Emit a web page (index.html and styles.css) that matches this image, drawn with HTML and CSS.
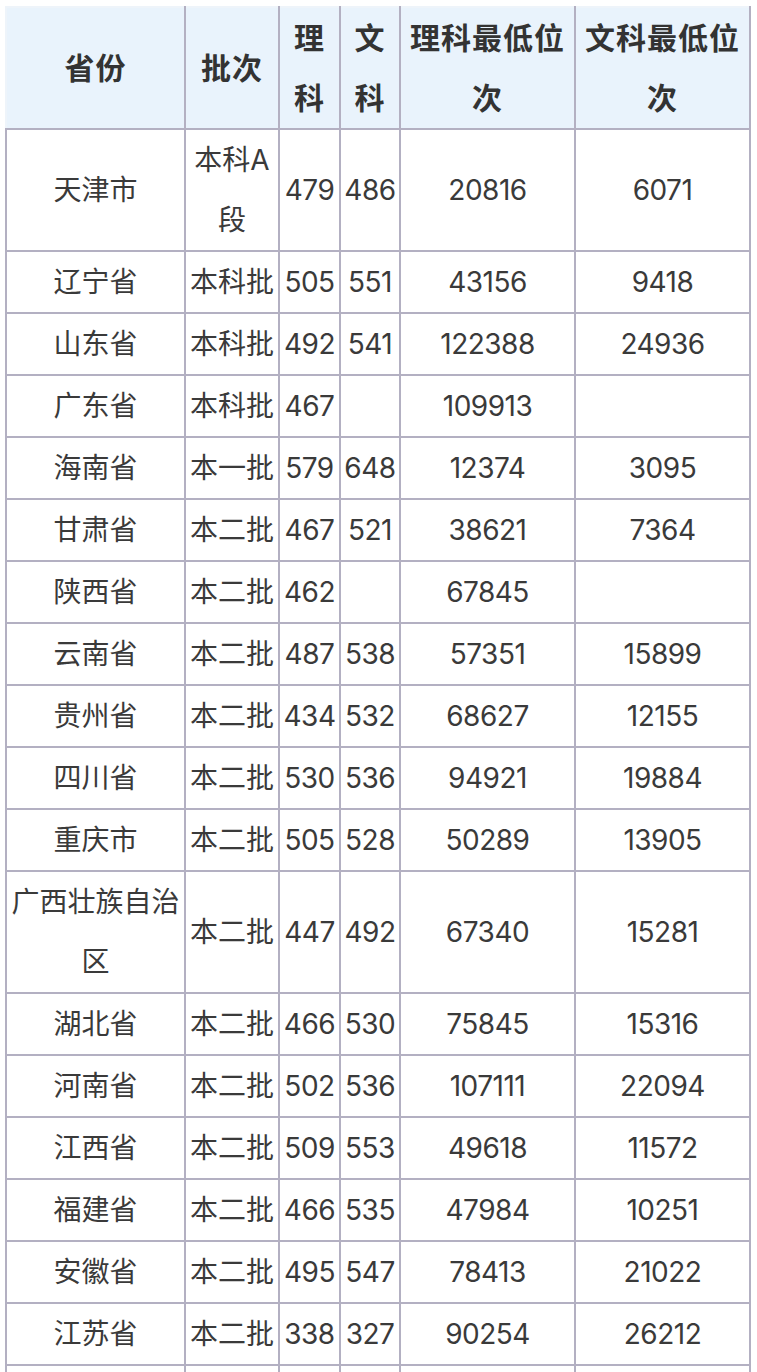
FILE: index.html
```html
<!DOCTYPE html>
<html lang="zh-CN">
<head>
<meta charset="utf-8">
<title>录取分数</title>
<link rel="stylesheet" href="styles.css">
</head>
<body>
<table class="score">
<colgroup>
<col class="c-prov"><col class="c-batch"><col class="c-li"><col class="c-wen"><col class="c-rank"><col class="c-rank">
</colgroup>
<thead>
<tr><th>省份</th><th>批次</th><th>理科</th><th>文科</th><th>理科最低位次</th><th>文科最低位次</th></tr>
</thead>
<tbody>
<tr><td>天津市</td><td>本科A段</td><td class="num">479</td><td class="num">486</td><td class="num">20816</td><td class="num">6071</td></tr>
<tr><td>辽宁省</td><td>本科批</td><td class="num">505</td><td class="num">551</td><td class="num">43156</td><td class="num">9418</td></tr>
<tr><td>山东省</td><td>本科批</td><td class="num">492</td><td class="num">541</td><td class="num">122388</td><td class="num">24936</td></tr>
<tr><td>广东省</td><td>本科批</td><td class="num">467</td><td class="num"></td><td class="num">109913</td><td class="num"></td></tr>
<tr><td>海南省</td><td>本一批</td><td class="num">579</td><td class="num">648</td><td class="num">12374</td><td class="num">3095</td></tr>
<tr><td>甘肃省</td><td>本二批</td><td class="num">467</td><td class="num">521</td><td class="num">38621</td><td class="num">7364</td></tr>
<tr><td>陕西省</td><td>本二批</td><td class="num">462</td><td class="num"></td><td class="num">67845</td><td class="num"></td></tr>
<tr><td>云南省</td><td>本二批</td><td class="num">487</td><td class="num">538</td><td class="num">57351</td><td class="num">15899</td></tr>
<tr><td>贵州省</td><td>本二批</td><td class="num">434</td><td class="num">532</td><td class="num">68627</td><td class="num">12155</td></tr>
<tr><td>四川省</td><td>本二批</td><td class="num">530</td><td class="num">536</td><td class="num">94921</td><td class="num">19884</td></tr>
<tr><td>重庆市</td><td>本二批</td><td class="num">505</td><td class="num">528</td><td class="num">50289</td><td class="num">13905</td></tr>
<tr><td>广西壮族自治区</td><td>本二批</td><td class="num">447</td><td class="num">492</td><td class="num">67340</td><td class="num">15281</td></tr>
<tr><td>湖北省</td><td>本二批</td><td class="num">466</td><td class="num">530</td><td class="num">75845</td><td class="num">15316</td></tr>
<tr><td>河南省</td><td>本二批</td><td class="num">502</td><td class="num">536</td><td class="num">107111</td><td class="num">22094</td></tr>
<tr><td>江西省</td><td>本二批</td><td class="num">509</td><td class="num">553</td><td class="num">49618</td><td class="num">11572</td></tr>
<tr><td>福建省</td><td>本二批</td><td class="num">466</td><td class="num">535</td><td class="num">47984</td><td class="num">10251</td></tr>
<tr><td>安徽省</td><td>本二批</td><td class="num">495</td><td class="num">547</td><td class="num">78413</td><td class="num">21022</td></tr>
<tr><td>江苏省</td><td>本二批</td><td class="num">338</td><td class="num">327</td><td class="num">90254</td><td class="num">26212</td></tr>
<tr class="tail"><td></td><td></td><td></td><td></td><td></td><td></td></tr>
</tbody>
</table>
</body>
</html>
```
FILE: styles.css
```css
html, body {
  margin: 0;
  padding: 0;
  background: #ffffff;
}
body {
  padding: 6px 0 0 5px;
  font-family: "Inter", "Noto Sans CJK SC", sans-serif;
  color: #3a3a3a;
}
.score {
  border-collapse: collapse;
  table-layout: fixed;
  width: 746px;
}
.c-prov { width: 179px; }
.c-batch { width: 94px; }
.c-li { width: 61px; }
.c-wen { width: 60px; }
.c-rank { width: 175px; }
.score th,
.score td {
  border: 2px solid #b3b0c2;
  padding: 0 3px;
  text-align: center;
  vertical-align: middle;
  line-height: 60px;
  font-size: 28px;
  font-weight: 400;
}
.score td.num {
  white-space: nowrap;
  padding: 0;
  letter-spacing: -0.5px;
}
.score th {
  background: #e9f3fc;
  font-weight: 700;
  font-size: 30px;
  letter-spacing: 1px;
  color: #333333;
  border-top-color: #eef4fa;
}
.score th:first-child {
  border-left-color: #eef4fa;
}
.score .tail td {
  height: 60px;
}
```
